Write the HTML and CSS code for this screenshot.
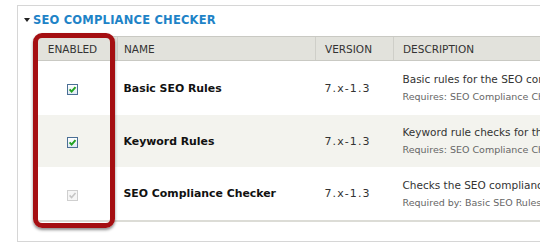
FILE: index.html
```html
<!DOCTYPE html>
<html>
<head>
<meta charset="utf-8">
<link rel="stylesheet" href="styles.css">
</head>
<body>
<div class="fieldset">
  <div class="legend"><span class="tri"></span><span class="legend-text">SEO COMPLIANCE CHECKER</span></div>
  <div class="wrap">
    <table class="modules">
      <thead>
        <tr>
          <th class="c-en">ENABLED</th>
          <th class="c-name">NAME</th>
          <th class="c-ver">VERSION</th>
          <th class="c-desc">DESCRIPTION</th>
        </tr>
      </thead>
      <tbody>
        <tr class="r1">
          <td class="c-en"><span class="cb on"><svg viewBox="0 0 11 11" width="11" height="11"><path d="M2.6 5.4 L4.6 7.6 L8.5 3.1" fill="none" stroke="#22a322" stroke-width="2"/></svg></span></td>
          <td class="c-name">Basic SEO Rules</td>
          <td class="c-ver">7.x-1.3</td>
          <td class="c-desc"><div class="d1">Basic rules for the SEO compliance checker.</div><div class="d2">Requires: SEO Compliance Checker (enabled)</div></td>
        </tr>
        <tr class="r2">
          <td class="c-en"><span class="cb on"><svg viewBox="0 0 11 11" width="11" height="11"><path d="M2.6 5.4 L4.6 7.6 L8.5 3.1" fill="none" stroke="#22a322" stroke-width="2"/></svg></span></td>
          <td class="c-name">Keyword Rules</td>
          <td class="c-ver">7.x-1.3</td>
          <td class="c-desc"><div class="d1">Keyword rule checks for the SEO compliance checker.</div><div class="d2">Requires: SEO Compliance Checker (enabled)</div></td>
        </tr>
        <tr class="r3">
          <td class="c-en"><span class="cb off"><svg viewBox="0 0 11 11" width="11" height="11"><path d="M2.6 5.4 L4.6 7.6 L8.5 3.1" fill="none" stroke="#c6c6c6" stroke-width="1.6"/></svg></span></td>
          <td class="c-name">SEO Compliance Checker</td>
          <td class="c-ver">7.x-1.3</td>
          <td class="c-desc"><div class="d1">Checks the SEO compliance of a node.</div><div class="d2">Required by: Basic SEO Rules (enabled), Keyword Rules (enabled)</div></td>
        </tr>
      </tbody>
    </table>
    <div class="highlight"></div>
  </div>
</div>
</body>
</html>
```
FILE: styles.css
```css
html, body {
  margin: 0;
  padding: 0;
  background: #fff;
  overflow: hidden;
}
body {
  width: 540px;
  height: 244px;
  font-family: "DejaVu Sans", Verdana, sans-serif;
  color: #222;
}
.fieldset {
  margin: 5px 0 0 17px;
  width: 523px;
  height: 237px;
  border: 1px solid #d6d6d6;
  border-right: none;
  box-sizing: border-box;
  overflow: hidden;
}
.legend {
  display: flex;
  align-items: center;
  height: 27px;
  padding-left: 6px;
  box-sizing: border-box;
  padding-top: 1px;
}
.tri {
  width: 0;
  height: 0;
  border-left: 3px solid transparent;
  border-right: 3px solid transparent;
  border-top: 4px solid #222;
  margin-right: 3px;
}
.legend-text {
  font-size: 11.5px;
  font-weight: bold;
  color: #1e83c7;
  letter-spacing: 0.2px;
}
.wrap {
  position: relative;
  margin: 3px 0 0 18px;
  width: 640px;
}
.modules {
  border-collapse: collapse;
  table-layout: fixed;
  width: 640px;
  font-size: 10.5px;
  border-bottom: 2px solid #dcdcd6;
}
.modules th {
  background: #e2e2dc;
  border-top: 1px solid #c9c9c3;
  border-bottom: 1px solid #c9c9c3;
  border-left: 1px solid #cfcfc9;
  height: 23px;
  padding: 0 0 0 6px;
  text-align: left;
  font-weight: normal;
  color: #333;
  font-size: 10.5px;
  white-space: nowrap;
}
.modules th.c-en {
  text-align: center;
  padding: 0 8px 0 0;
  border-left: none;
}
.c-en { width: 73px; }
.c-name { width: 191px; }
.c-ver { width: 68px; }
.modules td {
  padding: 0 0 0 6px;
  vertical-align: middle;
  white-space: nowrap;
}
.modules th.c-ver, .modules td.c-ver,
.modules th.c-desc, .modules td.c-desc { padding-left: 9px; }
.modules td.c-en { padding: 0 8px 0 0; text-align: center; }
.r1 td { height: 54px; background: #fff; }
.r2 td { height: 52px; background: #f3f3ee; }
.r3 td { height: 53px; background: #fff; }
.modules td.c-name {
  font-weight: bold;
  color: #111;
  font-size: 10.9px;
}
.modules td.c-ver {
  color: #333;
  font-size: 11px;
  letter-spacing: 1.1px;
}
.d1 {
  color: #333;
  font-size: 10.5px;
  margin-top: -1px;
}
.d2 {
  color: #666;
  font-size: 9.5px;
  margin-top: 6px;
}
.cb {
  display: inline-flex;
  width: 11px;
  height: 11px;
  box-sizing: border-box;
  vertical-align: middle;
  position: relative;
  top: 1px;
}
.cb svg { display: block; margin: -1px; }
.cb.on {
  border: 1px solid #4a6f95;
  background: linear-gradient(#ffffff, #dfe9f3);
}
.cb.off {
  border: 1px solid #cfcfcf;
  background: #f6f6f6;
}
.highlight {
  position: absolute;
  left: -3px;
  top: -3px;
  width: 82px;
  height: 195px;
  box-sizing: border-box;
  border: 5px solid #a50f12;
  border-radius: 9px;
  box-shadow: 0 2px 3px rgba(0,0,0,0.45);
}
```
